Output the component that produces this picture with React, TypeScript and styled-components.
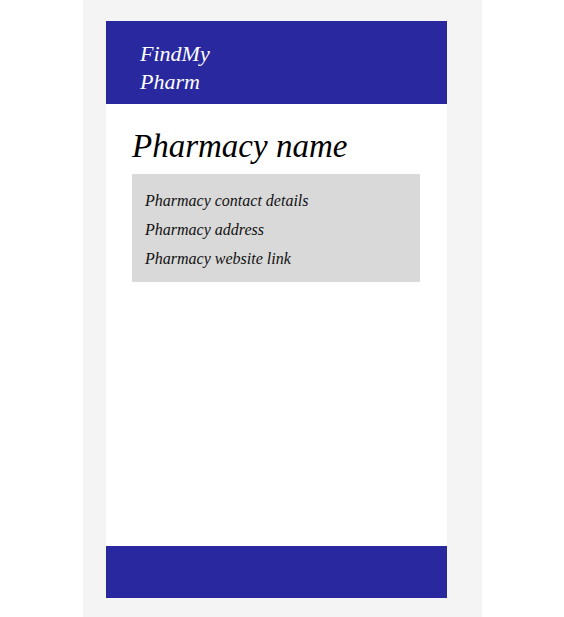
import styled, { createGlobalStyle } from 'styled-components';

const GlobalStyle = createGlobalStyle`
  html, body {
    margin: 0;
    padding: 0;
    background: #ffffff;
  }
`;

const Page = styled.div`
  width: 564px;
  height: 617px;
  display: flex;
  justify-content: flex-start;
`;

const Backdrop = styled.div`
  margin-left: 83px;
  width: 399px;
  height: 617px;
  background: #f4f4f4;
  padding: 21px 0 0 23px;
  box-sizing: border-box;
`;

const Phone = styled.div`
  width: 341px;
  height: 577px;
  background: #fff;
  display: flex;
  flex-direction: column;
  font-family: "Liberation Serif", "DejaVu Serif", serif;
  font-style: italic;
`;

const Bar = styled.div<{ $h: number }>`
  height: ${(p) => p.$h}px;
  background: #29289e;
  flex-shrink: 0;
`;

const Header = styled(Bar)`
  box-sizing: border-box;
  padding: 19px 0 0 34px;
`;

const Logo = styled.div`
  color: #fff;
  font-size: 22px;
  line-height: 28px;
`;

const Main = styled.div`
  flex: 1;
  padding: 22px 26px 0 26px;
`;

const Title = styled.h1`
  margin: 0 0 8px 0;
  font-size: 33px;
  font-weight: normal;
  line-height: 40px;
  color: #000;
`;

const InfoBox = styled.div`
  width: 288px;
  height: 108px;
  background: #d9d9d9;
  box-sizing: border-box;
  padding: 12px 13px;
  display: flex;
  flex-direction: column;
`;

const InfoLine = styled.div`
  font-size: 16px;
  line-height: 29px;
  color: #111;
`;

export default function App() {
  return (
    <>
      <GlobalStyle />
      <Page>
        <Backdrop>
          <Phone>
            <Header $h={83}>
              <Logo>FindMy<br />Pharm</Logo>
            </Header>
            <Main>
              <Title>Pharmacy name</Title>
              <InfoBox>
                <InfoLine>Pharmacy contact details</InfoLine>
                <InfoLine>Pharmacy address</InfoLine>
                <InfoLine>Pharmacy website link</InfoLine>
              </InfoBox>
            </Main>
            <Bar $h={52} />
          </Phone>
        </Backdrop>
      </Page>
    </>
  );
}
